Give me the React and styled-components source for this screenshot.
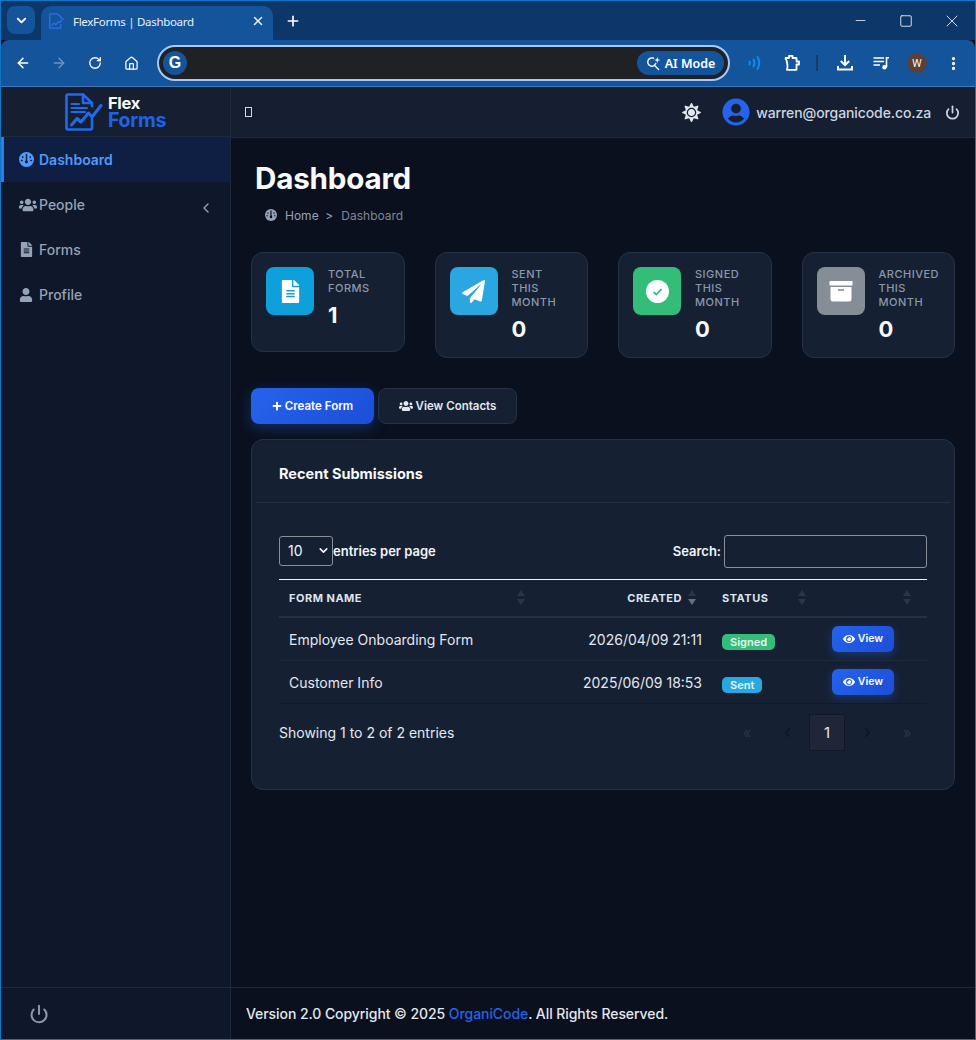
import React from 'react';
import styled, { createGlobalStyle } from 'styled-components';
import { FaUsers, FaFileAlt, FaUser, FaSun, FaPaperPlane, FaEye, FaPlus, FaUserCircle } from 'react-icons/fa';
import { ArrowLeft, ArrowRight, RotateCw, Home, ChevronLeft, ChevronRight, ChevronDown, Power, X, Plus, Minus, Square, EllipsisVertical } from 'lucide-react';

const GlobalStyle = createGlobalStyle`
  html, body { margin: 0; padding: 0; background: #0a101e; }
  * { box-sizing: border-box; }
  body { font-family: Inter, "Noto Sans", sans-serif; color: #f1f5f9; }
`;

const Frame = styled.div`
  width: 976px;
  height: 1040px;
  display: flex;
  flex-direction: column;
  border: 1px solid #1274c4;
  overflow: hidden;
`;

const TabStrip = styled.div`
  height: 39px;
  flex: none;
  background: #0d3768;
  display: flex;
  align-items: flex-end;
  padding-left: 6px;
  color: #fff;
`;

const TabMenu = styled.div`
  width: 28px;
  height: 28px;
  margin-bottom: 6px;
  border-radius: 8px;
  background: #14549b;
  display: flex;
  align-items: center;
  justify-content: center;
`;

const Tab = styled.div`
  width: 232px;
  height: 34px;
  margin-left: 6px;
  padding: 0 8px 4px;
  border-radius: 10px 10px 0 0;
  background: #14549b;
  display: flex;
  align-items: center;
  font-family: "Noto Sans", sans-serif;
  font-size: 11.5px;
  letter-spacing: -0.3px;
  color: #e8f0fb;
`;

const TabTitle = styled.span`
  flex: 1;
  margin-left: 8px;
`;

const NewTab = styled.div`
  margin: 0 0 11px 12px;
  display: flex;
`;

const WindowControls = styled.div`
  margin-left: auto;
  height: 39px;
  display: flex;
  align-self: flex-start;
  align-items: center;
`;

const WindowButton = styled.div`
  width: 46px;
  display: flex;
  justify-content: center;
  color: #fff;
`;

const Toolbar = styled.div`
  height: 47px;
  flex: none;
  background: #14549b;
  border-bottom: 1px solid #3f78b8;
  border-radius: 8px 8px 0 0;
  display: flex;
  align-items: center;
  padding-left: 4px;
  color: #fff;
`;

const NavIcon = styled.div`
  width: 36px;
  display: flex;
  justify-content: center;
  color: ${props => props.$muted ? '#6d93c2' : '#fff'};
`;

const Omnibox = styled.div`
  width: 573px;
  height: 36px;
  margin-left: 8px;
  border: 2px solid #a8c7fa;
  border-radius: 18px;
  background: #202124;
  display: flex;
  align-items: center;
  justify-content: space-between;
  padding: 0 4px;
`;

const GoogleBadge = styled.div`
  width: 24px;
  height: 24px;
  border-radius: 50%;
  background: #14549b;
  color: #fff;
  font-family: "Liberation Sans", sans-serif;
  font-weight: 700;
  font-size: 16px;
  display: flex;
  align-items: center;
  justify-content: center;
`;

const AiPill = styled.div`
  width: 87px;
  height: 24px;
  border-radius: 12px;
  background: #14549b;
  color: #fff;
  font-family: "Noto Sans", sans-serif;
  font-size: 12.5px;
  font-weight: 600;
  display: flex;
  align-items: center;
  justify-content: center;
  gap: 4px;
`;

const ToolIcons = styled.div`
  flex: 1;
  display: flex;
  align-items: center;
  padding-left: 6px;
`;

const ToolIcon = styled.div`
  width: ${props => props.$wide ? '38px' : '36px'};
  display: flex;
  justify-content: center;
`;

const ToolDivider = styled.div`
  width: 2px;
  height: 16px;
  margin: 0 9px 0 6px;
  background: #0f3d70;
`;

const Avatar = styled.div`
  width: 20px;
  height: 20px;
  margin: 0 8px;
  border-radius: 50%;
  background: #5c4038;
  color: #fff;
  font-family: "Noto Sans", sans-serif;
  font-size: 10px;
  display: flex;
  align-items: center;
  justify-content: center;
`;

const Body = styled.div`
  flex: 1;
  min-height: 0;
  display: flex;
`;

const Sidebar = styled.aside`
  width: 230px;
  flex: none;
  display: flex;
  flex-direction: column;
  background: #0f172a;
  border-right: 1px solid #1e293b;
`;

const Brand = styled.div`
  height: 50px;
  flex: none;
  display: flex;
  align-items: center;
  justify-content: center;
  gap: 5px;
  background: #161f32;
  border-bottom: 1px solid #1e293b;
`;

const BrandText = styled.div`
  display: flex;
  flex-direction: column;
  font-weight: 700;
  letter-spacing: -0.3px;
`;

const BrandFlex = styled.span`
  font-size: 16.5px;
  line-height: 16px;
  color: #f8fafc;
`;

const BrandForms = styled.span`
  font-size: 19.5px;
  line-height: 18px;
  color: #1f63e6;
`;

const Nav = styled.nav`
  flex: 1;
`;

const NavItem = styled.div`
  height: 45px;
  display: flex;
  align-items: center;
  gap: 5px;
  padding-left: ${props => props.$active ? '15px' : '18px'};
  border-left: ${props => props.$active ? '3px solid #2b7cf0' : 'none'};
  background: ${props => props.$active ? '#0f1f44' : 'transparent'};
  color: ${props => props.$active ? '#4f9bf7' : '#94a3b8'};
  font-size: 14px;
  font-weight: ${props => props.$active ? 600 : 500};
`;

const NavIconSlot = styled.span`
  width: 15px;
  display: flex;
  justify-content: flex-start;

  svg {
    flex: none;
  }
`;

const NavCaret = styled.span`
  margin-left: auto;
  margin-right: 16px;
  margin-top: 7px;
  display: flex;
  color: #94a3b8;
`;

const SideFooter = styled.div`
  height: 52px;
  flex: none;
  border-top: 1px solid #1e293b;
  display: flex;
  align-items: center;
  padding-left: 28px;
  color: #8a96a8;
`;

const Main = styled.div`
  flex: 1;
  min-width: 0;
  display: flex;
  flex-direction: column;
`;

const TopBar = styled.header`
  height: 51px;
  flex: none;
  background: #161f32;
  border-bottom: 1px solid #1e293b;
  display: flex;
  align-items: center;
  padding: 0 15px 0 14px;
  color: #cbd5e1;
`;

const MissingGlyph = styled.span`
  width: 7px;
  height: 10px;
  border: 1px solid #d5dae2;
`;

const UserEmail = styled.span`
  font-size: 14px;
  font-weight: 500;
  letter-spacing: -0.1px;
  margin: 0 14px 0 6px;
`;

const TopGear = styled.span`
  margin-left: auto;
  margin-right: 21px;
  display: flex;
  color: #e2e8f0;
`;

const UserIcon = styled.span`
  display: flex;
  color: #2563eb;
`;

const Content = styled.main`
  flex: 1;
  padding: 21px 20px 0;
  background: #0a101e;
`;

const PageTitle = styled.h1`
  margin: 0 0 0 4px;
  font-size: 29.6px;
  line-height: 38px;
  font-weight: 700;
  letter-spacing: -0.2px;
  color: #f8fafc;
`;

const Breadcrumb = styled.div`
  margin: 9px 0 28px 14px;
  height: 18px;
  display: flex;
  align-items: center;
  font-size: 12px;
  color: #94a3b8;
  gap: 8px;
`;

const Crumb = styled.span`
  color: ${props => props.$dim ? '#7c8798' : '#94a3b8'};
`;

const StatRow = styled.div`
  display: grid;
  grid-template-columns: repeat(4, 153.75px);
  column-gap: 29.75px;
  align-items: start;
`;

const StatCard = styled.div`
  padding: 14px 14px 15px;
  min-height: 100px;
  display: flex;
  gap: 14px;
  background: #162033;
  border: 1px solid #263145;
  border-radius: 12px;
`;

const StatIcon = styled.div`
  width: 48px;
  height: 48px;
  flex: none;
  border-radius: 8px;
  background: ${props => props.$bg};
  color: #fff;
  display: flex;
  align-items: center;
  justify-content: center;
`;

const StatLabel = styled.div`
  font-size: 11px;
  line-height: 14px;
  letter-spacing: 0.5px;
  font-weight: 500;
  text-transform: uppercase;
  color: #8b98ab;
`;

const StatValue = styled.div`
  font-size: 22px;
  line-height: 26px;
  margin-top: 6.5px;
  font-weight: 700;
  color: #f8fafc;
`;

const Actions = styled.div`
  margin-top: 30px;
  display: flex;
  gap: 4px;
`;

const PrimaryButton = styled.button`
  width: 123px;
  height: 36px;
  border: none;
  border-radius: 8px;
  background: linear-gradient(135deg, #2563eb, #1d4ed8);
  box-shadow: 0 4px 14px rgba(37, 99, 235, 0.35);
  color: #fff;
  font-family: inherit;
  font-size: 11.5px;
  font-weight: 600;
  display: flex;
  align-items: center;
  justify-content: center;
  gap: 3px;
`;

const GhostButton = styled(PrimaryButton)`
  width: 139px;
  background: #162033;
  border: 1px solid #263145;
  box-shadow: none;
  color: #e2e8f0;
`;

const Panel = styled.section`
  margin-top: 15px;
  height: 351px;
  background: #162033;
  border: 1px solid #263145;
  border-radius: 12px;
  padding: 0 4px;
`;

const PanelHead = styled.div`
  height: 63px;
  padding: 5px 23px 0;
  display: flex;
  align-items: center;
  border-bottom: 1px solid #263145;
  font-size: 14.5px;
  font-weight: 700;
  color: #f8fafc;
`;

const PanelBody = styled.div`
  padding: 32px 23px 0;
`;

const Controls = styled.div`
  display: flex;
  align-items: center;
  justify-content: space-between;
  height: 33px;
  font-size: 13px;
  font-weight: 600;
  color: #f1f5f9;
`;

const ControlGroup = styled.label`
  display: flex;
  align-items: center;
  gap: ${props => props.$gap || 0}px;
`;

const PageSize = styled.div`
  width: 54px;
  height: 30px;
  margin-top: -1px;
  padding: 0 2px 0 8px;
  border: 1px solid #8b8f97;
  border-radius: 3px;
  display: flex;
  align-items: center;
  justify-content: space-between;
  font-size: 14px;
  font-weight: 400;
`;

const SearchBox = styled.div`
  width: 203px;
  height: 33px;
  border: 1px solid #8b8f97;
  border-radius: 3px;
`;

const Table = styled.table`
  width: 648px;
  margin-top: 11px;
  border-collapse: collapse;
  table-layout: fixed;
  border-top: 1px solid #f1f5f9;
`;

const Th = styled.th`
  position: relative;
  height: 38px;
  padding: 1px ${props => props.$right ? '30px' : '10px'} 0 10px;
  text-align: ${props => props.$right ? 'right' : 'left'};
  border-bottom: 2px solid #263145;
  font-size: 11px;
  letter-spacing: 0.5px;
  font-weight: 700;
  text-transform: uppercase;
  color: #dfe5ee;
`;

const SortMarks = styled.span`
  position: absolute;
  right: 16px;
  top: 10px;
  display: flex;
  flex-direction: column;
  gap: 3px;
`;

const SortMark = styled.span`
  width: 0;
  height: 0;
  border-left: 4px solid transparent;
  border-right: 4px solid transparent;
  border-bottom: ${props => props.$down ? '0' : `6px solid ${props.$on ? '#647085' : '#2a3548'}`};
  border-top: ${props => props.$down ? `6px solid ${props.$on ? '#647085' : '#2a3548'}` : '0'};
`;

const Td = styled.td`
  height: 43px;
  padding: 2px 10px 0;
  text-align: ${props => props.$right ? 'right' : 'left'};
  border-bottom: 1px solid ${props => props.$last ? '#10192a' : '#1f2a3d'};
  font-size: 14px;
  color: #e2e8f0;
`;

const Badge = styled.span`
  display: inline-block;
  padding: 0 8px;
  height: 16px;
  line-height: 16px;
  border-radius: 5px;
  background: ${props => props.$bg};
  font-size: 11px;
  font-weight: 600;
  color: #e7f5ee;
  vertical-align: -3px;
`;

const ViewButton = styled.button`
  width: 62px;
  height: 26px;
  margin: 0 0 2px;
  border: none;
  border-radius: 6px;
  background: linear-gradient(135deg, #2563eb, #1d4ed8);
  box-shadow: 0 3px 10px rgba(37, 99, 235, 0.35);
  color: #fff;
  font-family: inherit;
  font-size: 10.5px;
  font-weight: 600;
  display: flex;
  align-items: center;
  justify-content: center;
  gap: 3px;
`;

const Pager = styled.div`
  margin-top: 10px;
  display: flex;
  align-items: center;
  justify-content: space-between;
  font-size: 14px;
  color: #e2e8f0;
`;

const PagerLinks = styled.div`
  display: flex;
  align-items: center;
`;

const PageLink = styled.span`
  width: ${props => props.$active ? '36px' : '40px'};
  height: 37px;
  margin: ${props => props.$active ? '0 2px' : '0'};
  display: flex;
  align-items: center;
  justify-content: center;
  font-size: 15px;
  color: ${props => props.$active ? '#e2e8f0' : props.$faint ? '#2a3548' : '#0d1422'};
  background: ${props => props.$active ? '#1e2638' : 'transparent'};
  border: ${props => props.$active ? '1px solid #10192a' : 'none'};
`;

const Footer = styled.footer`
  height: 52px;
  flex: none;
  display: flex;
  align-items: center;
  padding-left: 15px;
  border-top: 1px solid #1e293b;
  background: #0a101e;
  font-size: 14px;
  font-weight: 500;
  letter-spacing: -0.07px;
  color: #e2e8f0;
`;

const FooterLink = styled.span`
  color: #2563eb;
  white-space: pre;
`;

function LogoMark() {
  return (
    <svg width="38" height="38" viewBox="0 0 38 38" fill="none" stroke="#1f6bf0" strokeWidth="2.6" strokeLinecap="round" strokeLinejoin="round">
      <path d="M27 13 V10 L18 1.5 H3 Q1.5 1.5 1.5 3 V35 Q1.5 36.5 3 36.5 H25.5 Q27 36.5 27 35 V26" />
      <path d="M18 1.5 V10 H27" />
      <path d="M6.5 11 H14 M6.5 15 H22 M6.5 19 H20" strokeWidth="2" />
      <path d="M6.5 32 L12 25.5 L16 29 L23.5 20 L27 24 L36 12.5" strokeWidth="3" />
    </svg>
  );
}

function TabFavicon() {
  return (
    <svg width="16" height="18" viewBox="0 0 38 38" fill="none" stroke="#2f6fe8" strokeWidth="3" strokeLinejoin="round">
      <path d="M2 2 L20 2 L29 10 L29 14 M2 2 L2 36 L28 36 L28 26" />
      <path d="M6 30 L12 24 L16 28 L23 20 L26 23 L35 12" />
    </svg>
  );
}

function GaugeIcon({ size, cut }) {
  return (
    <svg width={size} height={size} viewBox="0 0 16 16">
      <circle cx="8" cy="8" r="8" fill="currentColor" />
      <path d="M8 2.5 V9 M4 5 V5.8 M12 5 V5.8 M2.6 9 H3.4 M12.6 9 H13.4" stroke={cut} strokeWidth="1.5" strokeLinecap="round" />
      <circle cx="8" cy="10.5" r="1.7" fill={cut} />
    </svg>
  );
}

function AiSearch() {
  return (
    <svg width="15" height="15" viewBox="0 0 16 16" fill="none" stroke="#fff" strokeWidth="1.5" strokeLinecap="round">
      <path d="M8 2.4 A4.4 4.4 0 1 0 10.4 8" />
      <path d="M9 10 L13.5 14.5" />
      <path d="M12 1 L12.8 3.4 L15.2 4.2 L12.8 5 L12 7.4 L11.2 5 L8.8 4.2 L11.2 3.4 Z" fill="#fff" stroke="none" />
    </svg>
  );
}

function SoundWaves() {
  return (
    <svg width="16" height="16" viewBox="0 0 16 16" fill="none" stroke="#0b8cf5" strokeWidth="2" strokeLinecap="round">
      <path d="M2.5 6.5 Q3.4 8 2.5 9.5" />
      <path d="M6.5 4.5 Q8.5 8 6.5 11.5" />
      <path d="M10.5 2 Q14 8 10.5 14" />
    </svg>
  );
}

function ExtensionIcon() {
  return (
    <svg width="18" height="18" viewBox="0 0 18 18" fill="none" stroke="#fff" strokeWidth="1.8" strokeLinejoin="round">
      <path d="M2.5 4 H6 V1.8 H9.5 V4 H13.5 V7.5 H16 V10.5 H13.5 V15.8 H4 Q5.5 10 2.5 4 Z" />
    </svg>
  );
}

function DownloadIcon() {
  return (
    <svg width="18" height="18" viewBox="0 0 18 18" fill="none" stroke="#fff" strokeWidth="2">
      <path d="M9 1 V11 M4.8 7 L9 11.2 L13.2 7" />
      <path d="M2 12 V15.5 H16 V12" />
    </svg>
  );
}

function QueueIcon() {
  return (
    <svg width="16" height="16" viewBox="0 0 16 16" fill="none" stroke="#fff" strokeWidth="1.6">
      <path d="M0.5 3 H11 M0.5 6.5 H11 M0.5 10 H7" />
      <path d="M13.5 12 V2.8 H16" />
      <circle cx="11.5" cy="12.3" r="2.2" fill="#fff" stroke="none" />
    </svg>
  );
}

function SignedIcon() {
  return (
    <svg width="23" height="23" viewBox="0 0 23 23" fill="none">
      <circle cx="11.5" cy="11.5" r="11.5" fill="#fff" />
      <path d="M7.5 11.8 L10.3 14.5 L15.5 9" stroke="#33bd78" strokeWidth="1.8" />
    </svg>
  );
}

function ArchiveIcon() {
  return (
    <svg width="24" height="21" viewBox="0 0 24 21">
      <path d="M0.5 0 H23.5 V4.5 H0.5 Z" fill="#fff" />
      <path d="M1.5 6 H22.5 V18 Q22.5 20.5 20 20.5 H4 Q1.5 20.5 1.5 18 Z" fill="#fff" />
      <path d="M9 9 H15" stroke="#858d96" strokeWidth="1.6" />
    </svg>
  );
}

const columns = [
  { label: 'Form Name', width: 262 },
  { label: 'Created', width: 171, right: true, on: true },
  { label: 'Status', width: 110 },
  { label: '', width: 105 },
];

const rows = [
  { name: 'Employee Onboarding Form', created: '2026/04/09 21:11', status: 'Signed', color: '#33bd78' },
  { name: 'Customer Info', created: '2025/06/09 18:53', status: 'Sent', color: '#2aa7e1', last: true },
];

const stats = [
  { label: 'Total Forms', value: '1', bg: '#0f9fdb', icon: <FaFileAlt size={23} /> },
  { label: 'Sent This Month', value: '0', bg: '#2aa7e1', icon: <FaPaperPlane size={23} /> },
  { label: 'Signed This Month', value: '0', bg: '#33bd78', icon: <SignedIcon /> },
  { label: 'Archived This Month', value: '0', bg: '#858d96', icon: <ArchiveIcon /> },
];

export default function App() {
  return (
    <>
      <GlobalStyle />
      <Frame>
        <TabStrip>
          <TabMenu><ChevronDown size={15} strokeWidth={3} /></TabMenu>
          <Tab>
            <TabFavicon />
            <TabTitle>FlexForms | Dashboard</TabTitle>
            <X size={14} strokeWidth={2.5} />
          </Tab>
          <NewTab><Plus size={16} strokeWidth={2.5} /></NewTab>
          <WindowControls>
            <WindowButton><Minus size={15} strokeWidth={1.2} /></WindowButton>
            <WindowButton><Square size={14} strokeWidth={1.4} /></WindowButton>
            <WindowButton><X size={20} strokeWidth={1} /></WindowButton>
          </WindowControls>
        </TabStrip>
        <Toolbar>
          <NavIcon><ArrowLeft size={16} strokeWidth={2.2} /></NavIcon>
          <NavIcon $muted><ArrowRight size={16} strokeWidth={2.2} /></NavIcon>
          <NavIcon><RotateCw size={14} strokeWidth={2.2} /></NavIcon>
          <NavIcon><Home size={15} strokeWidth={2} /></NavIcon>
          <Omnibox>
            <GoogleBadge>G</GoogleBadge>
            <AiPill><AiSearch />AI Mode</AiPill>
          </Omnibox>
          <ToolIcons>
            <ToolIcon $wide><SoundWaves /></ToolIcon>
            <ToolIcon><ExtensionIcon /></ToolIcon>
            <ToolDivider />
            <ToolIcon><DownloadIcon /></ToolIcon>
            <ToolIcon><QueueIcon /></ToolIcon>
            <Avatar>W</Avatar>
            <ToolIcon><EllipsisVertical size={17} strokeWidth={2.6} /></ToolIcon>
          </ToolIcons>
        </Toolbar>
        <Body>
          <Sidebar>
            <Brand>
              <LogoMark />
              <BrandText>
                <BrandFlex>Flex</BrandFlex>
                <BrandForms>Forms</BrandForms>
              </BrandText>
            </Brand>
            <Nav>
              <NavItem $active><NavIconSlot><GaugeIcon size={15} cut="#0f1f44" /></NavIconSlot>Dashboard</NavItem>
              <NavItem><NavIconSlot><FaUsers size={18} /></NavIconSlot>People<NavCaret><ChevronLeft size={16} strokeWidth={2} /></NavCaret></NavItem>
              <NavItem><NavIconSlot><FaFileAlt size={15} /></NavIconSlot>Forms</NavItem>
              <NavItem><NavIconSlot><FaUser size={14} /></NavIconSlot>Profile</NavItem>
            </Nav>
            <SideFooter><Power size={20} strokeWidth={2.5} /></SideFooter>
          </Sidebar>
          <Main>
            <TopBar>
              <MissingGlyph />
              <TopGear><FaSun size={19} /></TopGear>
              <UserIcon><FaUserCircle size={28} /></UserIcon>
              <UserEmail>warren@organicode.co.za</UserEmail>
              <Power size={15} strokeWidth={2.8} />
            </TopBar>
            <Content>
              <PageTitle>Dashboard</PageTitle>
              <Breadcrumb>
                <GaugeIcon size={12} cut="#0a101e" />
                <Crumb>Home &nbsp;&gt;</Crumb>
                <Crumb $dim>Dashboard</Crumb>
              </Breadcrumb>
              <StatRow>
                {stats.map(stat => (
                  <StatCard key={stat.label}>
                    <StatIcon $bg={stat.bg}>{stat.icon}</StatIcon>
                    <div>
                      <StatLabel>{stat.label}</StatLabel>
                      <StatValue>{stat.value}</StatValue>
                    </div>
                  </StatCard>
                ))}
              </StatRow>
              <Actions>
                <PrimaryButton><FaPlus size={10} />Create Form</PrimaryButton>
                <GhostButton><FaUsers size={14} />View Contacts</GhostButton>
              </Actions>
              <Panel>
                <PanelHead>Recent Submissions</PanelHead>
                <PanelBody>
                  <Controls>
                    <ControlGroup>
                      <PageSize>10<ChevronDown size={13} strokeWidth={3} /></PageSize>
                      entries per page
                    </ControlGroup>
                    <ControlGroup $gap={3}>
                      Search:
                      <SearchBox />
                    </ControlGroup>
                  </Controls>
                  <Table>
                    <colgroup>
                      {columns.map(col => <col key={col.label} width={col.width} />)}
                    </colgroup>
                    <thead>
                      <tr>
                        {columns.map(col => (
                          <Th key={col.label} $right={col.right}>
                            {col.label}
                            <SortMarks>
                              <SortMark />
                              <SortMark $down $on={col.on} />
                            </SortMarks>
                          </Th>
                        ))}
                      </tr>
                    </thead>
                    <tbody>
                      {rows.map(row => (
                        <tr key={row.name}>
                          <Td $last={row.last}>{row.name}</Td>
                          <Td $last={row.last} $right>{row.created}</Td>
                          <Td $last={row.last}><Badge $bg={row.color}>{row.status}</Badge></Td>
                          <Td $last={row.last}><ViewButton><FaEye size={12} />View</ViewButton></Td>
                        </tr>
                      ))}
                    </tbody>
                  </Table>
                  <Pager>
                    Showing 1 to 2 of 2 entries
                    <PagerLinks>
                      <PageLink $faint>«</PageLink>
                      <PageLink><ChevronLeft size={15} strokeWidth={2.5} /></PageLink>
                      <PageLink $active>1</PageLink>
                      <PageLink><ChevronRight size={15} strokeWidth={2.5} /></PageLink>
                      <PageLink $faint>»</PageLink>
                    </PagerLinks>
                  </Pager>
                </PanelBody>
              </Panel>
            </Content>
            <Footer>
              Version 2.0 Copyright © 2025&nbsp;<FooterLink>OrganiCode</FooterLink>. All Rights Reserved.
            </Footer>
          </Main>
        </Body>
      </Frame>
    </>
  );
}
